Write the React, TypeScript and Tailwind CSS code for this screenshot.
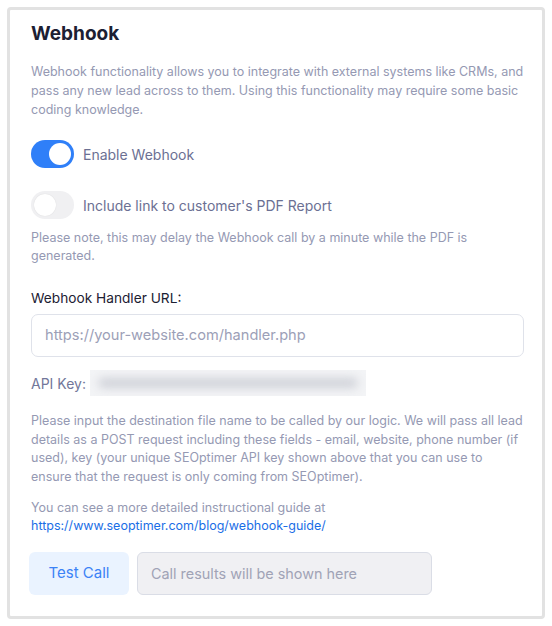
import React from 'react';

function Toggle({ on }: { on: boolean }) {
  return (
    <span
      className={
        on
          ? 'relative inline-flex h-[28px] w-[43px] shrink-0 items-center rounded-full bg-[#2f7ff8]'
          : 'relative inline-flex h-[28px] w-[43px] shrink-0 items-center rounded-full bg-[#f0f0f2]'
      }
    >
      <span
        className={
          on
            ? 'absolute left-[18px] h-[22px] w-[22px] rounded-full bg-white'
            : 'absolute left-[3px] h-[22px] w-[22px] rounded-full bg-white shadow-[0_0_1px_rgba(0,0,0,0.15)]'
        }
      />
    </span>
  );
}

export default function App() {
  return (
    <div className="bg-white p-[7px] font-['Inter',sans-serif]" style={{ width: 552, height: 626 }}>
      <div className="h-[612px] w-[538px] rounded-[4px] border-[3px] border-[#e2e2e2] bg-white pl-[21px] pr-[18px] pt-[9px]">
        <h2 className="text-[19px] font-bold leading-[30px] text-[#1c2033]">Webhook</h2>
        <p className="mt-[13px] text-[12.5px] leading-[19px] text-[#9599b3]">
          Webhook functionality allows you to integrate with external systems like CRMs, and pass any new lead
          across to them. Using this functionality may require some basic coding knowledge.
        </p>

        <div className="mt-[21px] flex items-center gap-[9px]">
          <Toggle on />
          <span className="text-[14px] text-[#6b7093]">Enable Webhook</span>
        </div>

        <div className="mt-[23px] flex items-center gap-[9px]">
          <Toggle on={false} />
          <span className="text-[14px] text-[#6b7093]">Include link to customer's PDF Report</span>
        </div>
        <p className="mt-[10px] text-[12.5px] leading-[18px] text-[#9599b3]">
          Please note, this may delay the Webhook call by a minute while the PDF is generated.
        </p>

        <label className="mt-[23px] block text-[13.7px] leading-[20px] text-[#1c2033]">Webhook Handler URL:</label>
        <div className="mt-[6px] flex h-[43px] w-[493px] items-center rounded-[7px] border border-[#dfe2ea] px-[13px] text-[14.6px] text-[#9ca0b7]">
          https://your-website.com/handler.php
        </div>

        <div className="mt-[13px] flex h-[26px] items-center">
          <span className="text-[14px] text-[#72779a]">API Key:</span>
          <span className="ml-[4px] h-[26px] w-[276px] overflow-hidden bg-[#f3f4f6]">
            <span className="mx-[8px] mt-[8px] block h-[10px] rounded-full bg-[#cfd1d8] blur-[5px]" />
          </span>
        </div>

        <p className="mt-[16px] text-[12.5px] leading-[18.7px] text-[#9599b3]">
          Please input the destination file name to be called by our logic. We will pass all lead details as a POST
          request including these fields - email, website, phone number (if used), key (your unique SEOptimer API
          key shown above that you can use to ensure that the request is only coming from SEOptimer).
        </p>

        <p className="mt-[12px] text-[12.5px] leading-[18.5px] text-[#9599b3]">
          You can see a more detailed instructional guide at
          <br />
          <a href="#" className="text-[#1a6ee6]">
            https://www.seoptimer.com/blog/webhook-guide/
          </a>
        </p>

        <div className="-ml-[2px] mt-[16px] flex items-center gap-[8px]">
          <button className="h-[43px] w-[100px] rounded-[6px] bg-[#eaf3ff] text-[15px] text-[#3b82f6]">Test Call</button>
          <div className="flex h-[43px] w-[295px] items-center rounded-[6px] border border-[#dadde6] bg-[#f0f0f3] px-[13px] text-[14.4px] text-[#a0a3b6]">
            Call results will be shown here
          </div>
        </div>
      </div>
    </div>
  );
}
